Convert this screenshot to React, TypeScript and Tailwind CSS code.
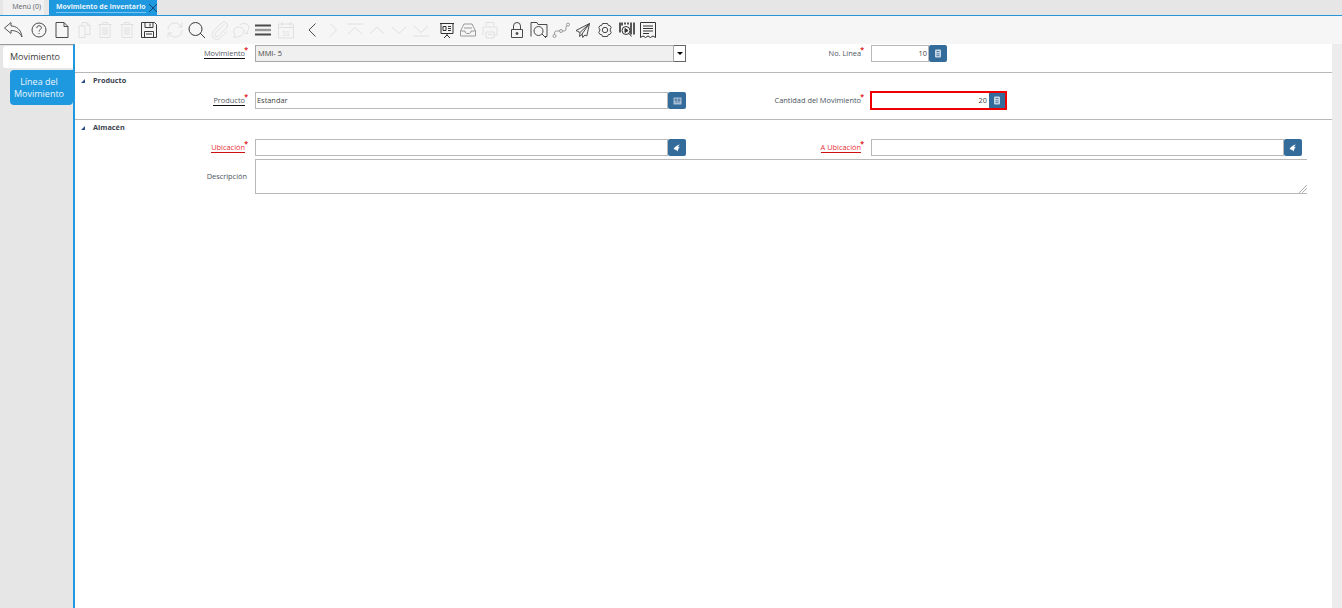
import React from "react";

const dark = "#4a4a4a";
const dim = "#e0e0e0";
const mid = "#9a9a9a";

type IconDef = { c: string; w?: number; n: React.ReactNode };

const icons: IconDef[] = [
  { c: "#555", w: 26, n: <path d="M2.500 9 9 3.500v3.500c5 0 10 3 11 11-2-4.500-6-6.500-11-6.500v3z" /> },
  { c: dark, w: 23, n: <><circle cx="11" cy="11" r="7" /><path d="M8.800 9c0-3 4.600-3 4.600-.3 0 1.800-2.300 1.900-2.300 3.800M11 14v1" /></> },
  { c: dark, n: <path d="M5 3.500h8l4 4v11H5zM13 3.500v4h4" /> },
  { c: dim, w: 21, n: <path d="M6 7h6v11.500H6zM9 7V3.500h5l3 3v9h-5M14 3.500v3h3" /> },
  { c: dim, n: <path d="M4.500 5.500h13M8.500 5.500V3.500h5v2M6 5.500v13h10v-13M9 8v8M11 8v8M13 8v8" /> },
  { c: dim, n: <path d="M4.500 5.500h13M8.500 5.500V3.500h5v2M6 5.500v13h10v-13M9 8v8M11 8v8M13 8v8" /> },
  { c: "#3a3a3a", w: 26, n: <path d="M3.500 3.500h13l2 2v13h-15zM7 3.500v5h8v-5M12 4.500v3M6.500 18.500v-6h9v6M8 15h6" /> },
  { c: dim, n: <path d="M4 11a7 7 0 0 1 12-5l2 2M18 3.500V8h-4M18 11a7 7 0 0 1-12 5l-2-2M4 18.500V14h4" /> },
  { c: "#3a3a3a", n: <path d="M9.500 3.500a6.500 6.500 0 1 0 0 13 6.500 6.500 0 0 0 0-13zM14 14l5 5" /> },
  { c: dim, n: <path d="M16 5.500 7.500 14a2 2 0 0 0 3 3l8-8a3.500 3.500 0 0 0-5-5l-8.500 8.500a5 5 0 0 0 7 7l7-7" /> },
  { c: dim, n: <path d="M9 17.500c-3 1-5 .5-5.500.5 1-1 1.500-2 1.500-3-3-3-.5-7 3.500-7s6 3 5 6-3 3-4.500 3.500zM10 6c1-2 8-2.500 9 2 .4 2-1 3.500-2 4.500l1 2.500-3-1" /> },
  { c: dark, w: 23, n: <><path d="M3 6.500h16M3 15.500h16" strokeWidth="1.800" /><path d="M3 11h16" strokeWidth="2.400" stroke="#999" /></> },
  { c: dim, w: 26, n: <><path d="M3.500 5h15v14h-15zM3.500 8.500h15M7 3v4M15 3v4" /><text x="11" y="17" fontSize="7" textAnchor="middle" fill={dim} stroke="none" fontFamily="Liberation Sans, sans-serif">31</text></> },
  { c: dark, w: 21, n: <path d="M14.500 4.500 8 11l6.500 6.500" /> },
  { c: dim, n: <path d="M8 4.500 14.500 11 8 17.500" /> },
  { c: dim, n: <path d="M3 5h16M4 15 11 8.500 18 15" /> },
  { c: dim, n: <path d="M4 14.500 11 8 18 14.500" /> },
  { c: dim, n: <path d="M4 8 11 14.500 18 8" /> },
  { c: dim, w: 26, n: <path d="M3 17h16M4 7 11 13.500 18 7" /> },
  { c: "#333", w: 21, n: <><path d="M4 4.500h14M5 4.500v10h12v-10M11 14.500v2M8 19l3-3 3 3" /><path d="M7 7.500h3v4H7zM12 7.500h3M12 9.500h3M12 11.500h3" /></> },
  { c: mid, n: <path d="M3.500 12 7 5h8l3.500 7v5h-15zM3.500 12H8c0 2 1 2.500 3 2.500s3-.5 3-2.500h4.500M7 9h8" /> },
  { c: dim, w: 27, n: <path d="M7 7V3.500h8V7M4 16V8h14v8h-3M7 13h8v6H7zM9 15.500h4" /> },
  { c: dark, n: <><path d="M5.500 10.500h11v8h-11zM7.500 10.500V7a3.500 3.500 0 0 1 7 0v3.500" /><circle cx="11" cy="14.500" r="1" fill={dark} /></> },
  { c: dark, n: <><path d="M3 17.500v-14h6l1 2h9v12h-3" /><circle cx="10.500" cy="12" r="4.500" /><path d="m14 15 4 4" /></> },
  { c: mid, n: <><circle cx="4.500" cy="17" r="1.500" /><circle cx="11" cy="12" r="1.500" /><circle cx="18" cy="5.500" r="1.500" /><path d="M4.500 15.500V14a2 2 0 0 1 2-2h3M12.500 12H14a2 2 0 0 0 2-2V8l1-1.500" /></> },
  { c: dark, n: <path d="M17.500 4.500 4 11.500l4 2 9.500-9-7.500 10.500.8 3.500 2-2.500 2 1zM8 13.500l-.5 4 3-2.500" /> },
  { c: dark, n: <><path d="M8.500 4.500h5l.7 1.800 1.900.4 1.100 1.800-1.200 2.500 1.200 2.500-1.100 1.800-1.900.4-.7 1.800h-5l-.7-1.800-1.900-.4-1.100-1.800 1.200-2.500-1.200-2.500 1.100-1.800 1.900-.4z" /><circle cx="11" cy="11" r="2.700" /></> },
  { c: "#333", w: 21, n: <><path d="M4 3.500v10M6 3.500v3M9 3.500v2M12 3.500v2M15 3.500v12M18 3.500v12" strokeWidth="1.600" /><circle cx="10" cy="11.500" r="4" /><path d="m13 14.500 2.500 3" /><path d="M9 9.500v4l3-2z" fill="#333" /></> },
  { c: "#333", n: <path d="M3.500 3.500h15v15l-2.500-1.500-2.500 1.500-2.500-1.500-2.500 1.500L6 17l-2.500 1.500zM6 7h10M6 9.500h10M6 12h10M6 14.500h6" /> },
];

function ToolIcon({ def }: { def: IconDef }) {
  return (
    <svg
      width={22}
      height={22}
      viewBox="0 0 22 22"
      fill="none"
      stroke={def.c}
      strokeWidth="1"
      className="shrink-0"
      style={{ marginRight: (def.w ?? 22) - 22 }}
    >
      {def.n}
    </svg>
  );
}

function Star() {
  return <span className="absolute -top-[2px] right-0 text-[7px] leading-[10px] font-bold text-[#e02020]">*</span>;
}

function ReqLabel({ text, link = true, red, width }: { text: string; link?: boolean; red?: boolean; width: string }) {
  return (
    <div className={`${width} shrink-0 pt-[2px] pr-[7px] text-right text-[7.400px] leading-[12px] text-[#4a5360]`}>
      <span className="relative inline-block pr-[3px]">
        <span className={link ? (red ? "border-b border-[#d01010] text-[#e8303a]" : "border-b border-[#111] text-[#555a64]") : ""}>{text}</span>
        <Star />
      </span>
    </div>
  );
}

function CalcIcon() {
  return (
    <svg width="8" height="9" viewBox="0 0 8 9">
      <rect x="1" y="0.500" width="6" height="8" rx="1" fill="#c9d8e6" />
      <path d="M2.500 2.500h3M2.500 4.800h3M2.500 6.600h3" stroke="#3a6a98" strokeWidth="0.800" />
    </svg>
  );
}

function LocIcon() {
  return (
    <svg width="10" height="10" viewBox="0 0 10 10">
      <path d="M1.500 6C3 3.500 5.500 1.800 8 1.500 6.800 2.500 6.200 3.300 6.200 4.200H8C6.500 5 5.800 6.500 5.800 8.500 5 7.500 3.500 6.500 1.500 6z" fill="#fff" />
    </svg>
  );
}

function ProductIcon() {
  return (
    <svg width="9" height="8" viewBox="0 0 9 8">
      <rect x="0.500" y="0.500" width="8" height="7" fill="#a9c0d6" />
      <path d="M2 2h1.500v1.500H2zM5 2h2v1.500H5zM2 5h5" stroke="#3a6a98" strokeWidth="0.700" fill="none" />
    </svg>
  );
}

function Btn({ children }: { children: React.ReactNode }) {
  return (
    <div className="flex h-[17px] w-[18px] shrink-0 items-center justify-center rounded-[2px] bg-[#336b9b]">{children}</div>
  );
}

function Section({ title }: { title: string }) {
  return (
    <div className="flex h-[15px] items-center pl-[6px]">
      <svg width="4" height="4" viewBox="0 0 4 4" className="mr-[8px]">
        <path d="M4 0v4H0z" fill="#2a4f8a" />
      </svg>
      <span className="text-[7.300px] font-bold text-[#3c4450]">{title}</span>
    </div>
  );
}

export default function App() {
  return (
    <div className="flex h-[608px] w-[1342px] flex-col overflow-hidden bg-white font-['Open_Sans',sans-serif]">
      {/* tab strip */}
      <div className="flex h-[16px] shrink-0 border-b border-[#2a93d5] bg-[#e6e6e6] pl-[3px]">
        <div className="flex h-[15px] w-[41px] items-center justify-end bg-[#f1f1f1] pr-[3px] text-[7px] text-[#5a6068]">Menú (0)</div>
        <div className="ml-[5px] flex h-[15px] w-[108px] items-center bg-[#1e98de] pl-[7px]">
          <span className="border-b border-[#7cc4ef] text-[6.900px] leading-[10px] font-bold whitespace-nowrap text-[#e8f5fd]">Movimiento de Inventario</span>
          <svg width="10" height="10" viewBox="0 0 10 10" className="mr-[-1px] ml-auto">
            <path d="M1 1l8 8M9 1 1 9" stroke="#17456e" strokeWidth="1" />
          </svg>
        </div>
      </div>

      {/* toolbar */}
      <div className="flex h-[28px] shrink-0 items-center bg-[#f6f6f6] pl-[2px]">
        {icons.map((d, i) => (
          <ToolIcon key={i} def={d} />
        ))}
      </div>

      <div className="flex min-h-0 flex-1">
        {/* side tabs */}
        <div className="flex w-[75px] shrink-0 flex-col border-t border-r-2 border-t-[#9a9a9a] border-r-[#1e98de] bg-[#e6e6e6] pt-[1px]">
          <div className="ml-[3px] flex h-[22px] items-center justify-center rounded-l-[3px] bg-white pr-[6px] text-[9px] text-[#3b3b3b]">Movimiento</div>
          <div className="mt-[2px] ml-[10px] flex h-[35px] items-center justify-center rounded-l-[4px] rounded-br-[4px] bg-[#1e98de] pr-[5px] text-center text-[9px] leading-[12px] text-[#eaf6fd]">
            Línea del
            <br />
            Movimiento
          </div>
        </div>

        {/* form */}
        <div className="min-w-0 flex-1 bg-white">
          <div className="flex h-[29px] items-start border-b border-[#b8b8b8] pt-[1px]">
            <ReqLabel width="w-[180px]" text="Movimiento" />
            <div className="flex h-[17px] w-[419px] shrink-0 items-center border border-[#a8a8a8] bg-[#f0f0f0] pt-[1px] pl-[2px] text-[7.400px] text-[#444]">MMI- 5</div>
            <div className="flex h-[17px] w-[12px] shrink-0 items-center justify-center border border-l-0 border-[#666] bg-white">
              <div className="border-x-[3px] border-t-[3px] border-x-transparent border-t-black" />
            </div>
            <ReqLabel width="w-[185px]" link={false} text="No. Línea" />
            <div className="flex h-[17px] w-[58px] shrink-0 items-center justify-end border border-[#b8b8b8] pt-[1px] pr-[1px] text-[7.400px] text-[#444]">10</div>
            <Btn><CalcIcon /></Btn>
          </div>

          <Section title="Producto" />
          <div className="mt-[4px] flex h-[28px] items-start border-b border-[#b8b8b8]">
            <ReqLabel width="w-[180px]" text="Producto" />
            <div className="flex h-[17px] w-[413px] shrink-0 items-center border border-[#b8b8b8] pt-[1px] pl-[1px] text-[7.400px] text-[#444]">Estandar</div>
            <Btn><ProductIcon /></Btn>
            <ReqLabel width="w-[185px]" link={false} text="Cantidad del Movimiento" />
            <div className="-mt-[1px] -ml-[1px] flex h-[19px] w-[137px] shrink-0 items-center border-2 border-[#ee0000]">
              <div className="flex h-full flex-1 items-center justify-end pt-[1px] pr-[2px] text-[7.400px] text-[#444]">20</div>
              <div className="flex h-full w-[16px] items-center justify-center bg-[#336b9b]"><CalcIcon /></div>
            </div>
          </div>

          <Section title="Almacén" />
          <div className="mt-[4px] flex h-[20px] items-start">
            <ReqLabel width="w-[180px]" text="Ubicación" red />
            <div className="h-[17px] w-[413px] shrink-0 border border-[#b8b8b8]" />
            <Btn><LocIcon /></Btn>
            <ReqLabel width="w-[185px]" text="A Ubicación" red />
            <div className="h-[17px] w-[413px] shrink-0 border border-[#b8b8b8]" />
            <Btn><LocIcon /></Btn>
          </div>
          <div className="flex h-[35px] items-start">
            <div className="w-[180px] shrink-0 pt-[11px] pr-2 text-right text-[7.400px] leading-[12px] text-[#4a5360]">Descripción</div>
            <div className="relative h-[35px] w-[1052px] shrink-0 border border-r-0 border-[#b8b8b8]">
              <svg width="8" height="8" viewBox="0 0 8 8" className="absolute right-0 bottom-0">
                <path d="M7.500.500l-7 7M7.500 3.500l-4 4" stroke="#444" strokeWidth="0.800" strokeDasharray="1 0.500" />
              </svg>
            </div>
          </div>
        </div>

        {/* right gutter */}
        <div className="w-[10px] shrink-0 bg-[#ececec]" />
      </div>
    </div>
  );
}
